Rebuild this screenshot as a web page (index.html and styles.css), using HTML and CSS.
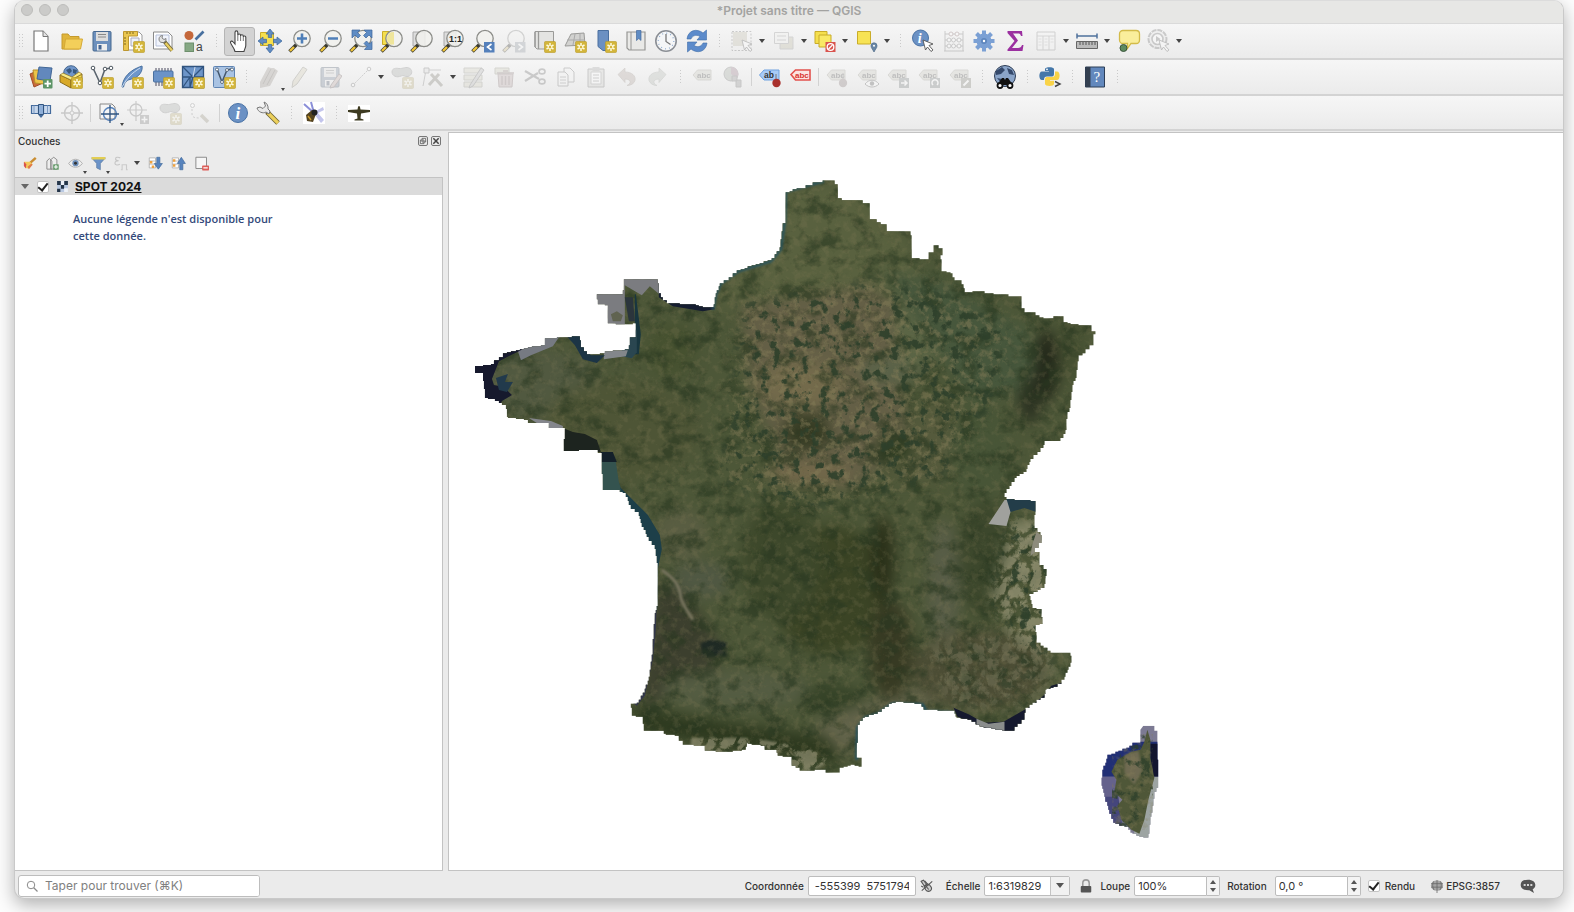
FILE: index.html
```html
<!DOCTYPE html>
<html lang="fr">
<head>
  <meta charset="utf-8">
  <title>*Projet sans titre — QGIS</title>
  <link rel="stylesheet" href="styles.css">
</head>
<body>
  <!-- icon set -->
  <svg class="sprite" aria-hidden="true">
    <symbol id="star" viewBox="0 0 24 24"><rect x="12.500" y="12.500" width="11" height="11" rx="1" fill="#d3b53a" stroke="#b99a25" stroke-width=".6"/><path d="M18 14v8M14.500 16l7 4M21.500 16l-7 4" stroke="#fffbe0" stroke-width="1.500"/><circle cx="18" cy="18" r="1.200" fill="#d3b53a"/></symbol>
    <symbol id="glass" viewBox="0 0 24 24"><path d="M1.500 22.500 8.500 15.500" stroke="#3a3a30" stroke-width="3.600"/><path d="M2 22 6 18" stroke="#f0c53a" stroke-width="2.400"/><circle cx="14" cy="9.500" r="8.200" fill="#f1f1ed" fill-opacity=".85" stroke="#8b8c88" stroke-width="1.300"/></symbol>
    <symbol id="tag" viewBox="0 0 24 24"><path d="M2 10 6.500 5H20v10H6.500z" fill="#cfcbb4" stroke="#a8a592"/><text x="6" y="12.500" font-size="8" font-weight="700" font-family="Liberation Sans, sans-serif" fill="#555">abc</text></symbol>
    <symbol id="cursor" viewBox="0 0 24 24"><path d="M12 11l10 4-4 1.500 4 4.500-2 1.500-3.500-4.500-2 3z" fill="#fff" stroke="#555" stroke-width=".9"/></symbol>

    <symbol id="new" viewBox="0 0 24 24"><path d="M5 2h9l5 5.500V22H5z" fill="#fff" stroke="#777" stroke-width="1.200"/><path d="M14 2v5.500h5" fill="#e4e4e4" stroke="#777"/></symbol>
    <symbol id="open" viewBox="0 0 24 24"><path d="M2 20V5h6l2 2.500h9V20z" fill="#e0b53c" stroke="#c59a2c"/><path d="M4 20l1.500-10H22.500L20.500 20z" fill="#f3cf5a" stroke="#d5a935"/></symbol>
    <symbol id="save" viewBox="0 0 24 24"><rect x="3" y="2.500" width="18" height="19.500" rx="1" fill="#6d90bd" stroke="#47688f"/><rect x="6" y="3" width="12" height="9" fill="#ddd"/><path d="M8 5.500h8M8 8h8" stroke="#888"/><rect x="7" y="15" width="10" height="6.500" fill="#eee"/><rect x="8.500" y="16" width="3" height="4.500" fill="#456592"/></symbol>
    <symbol id="layout" viewBox="0 0 24 24"><path d="M6 3h12l3 3v15H6z" fill="#fff" stroke="#999"/><path d="M2.500 2.500h14v4.500H7.500v14.500h-5z" fill="#eac64f" stroke="#bd9730"/><path d="M6 3v2M9 3v2M12 3v2M3 9h2M3 12h2M3 15h2" stroke="#7d661c"/><path d="M10 9h8v8h-8z" fill="#eef2fa" stroke="#aab"/><use href="#star"/></symbol>
    <symbol id="manager" viewBox="0 0 24 24"><path d="M2.500 3H17l4 4v13H2.500z" fill="#fff" stroke="#8a8a8a"/><path d="M5 6h13v11H5z" fill="#f1f4fc" stroke="#b7c1da"/><path d="M13 12l8 9.500" stroke="#6f6434" stroke-width="3.800"/><path d="M14.500 14l6.500 7.500" stroke="#e9cf62" stroke-width="2.400"/><path d="M8 10c0-2 1.500-3.500 3.500-3.500L11 9l2 1.500 2-1c.5 3-2 4.500-4 4C9 13.500 8 12 8 10z" fill="#e2e2e2" stroke="#777" stroke-width=".9"/></symbol>
    <symbol id="style" viewBox="0 0 24 24"><circle cx="7" cy="6.500" r="4.500" fill="#c4673a"/><path d="M13.500 10.500l8-8" stroke="#48709f" stroke-width="2.600"/><rect x="3" y="14" width="8.500" height="8.500" fill="#86a884" stroke="#6d8f6c"/><text x="14" y="22" font-size="12" font-family="Liberation Sans, sans-serif" fill="#444">a</text></symbol>
    <symbol id="hand" viewBox="0 0 24 24"><path d="M8 22.500c-1-4-4-6.500-4.500-9-.2-1.500 1.500-2 2.700-.5L8 15V3.500c0-2.200 2.800-2.200 2.800 0v3c0-2 2.800-2 2.800 0v.5c0-1.800 2.700-1.600 2.700.2v.8c0-1.500 2.500-1.400 2.500.3v8c0 2.500-1.500 4-1.800 6.200z" fill="#fff" stroke="#444" stroke-width="1.100"/><path d="M10.800 6.500V12M13.600 7V12M16.300 8V12" stroke="#666" stroke-width=".9"/></symbol>
    <symbol id="pansel" viewBox="0 0 24 24"><path d="M2.500 3.500h13v13h-13z" fill="#f5df4e" stroke="#c9ac29"/><path d="M12 0l4 5h-2.300v3.500h-3.400V5H8zM12 24l4-5h-2.300v-3.500h-3.400V19H8zM0 12l5-4v2.300h3.500v3.400H5V16zM24 12l-5-4v2.300h-3.500v3.400H19V16z" fill="#5f8cc4" stroke="#3c659b" stroke-width=".7"/></symbol>
    <symbol id="zin" viewBox="0 0 24 24"><use href="#glass"/><path d="M14 4.500v10M9 9.500h10" stroke="#4f7fb8" stroke-width="2.600"/></symbol>
    <symbol id="zout" viewBox="0 0 24 24"><use href="#glass"/><path d="M9 9.500h10" stroke="#4f7fb8" stroke-width="2.600"/></symbol>
    <symbol id="zfull" viewBox="0 0 24 24"><use href="#glass"/><path d="M3 1h8L8.500 3.500l3 3-2.500 2.500-3-3L3 9zM23 1h-8l2.500 2.500-3 3 2.500 2.500 3-3L23 9zM23 20.500v-8l-2.500 2.500-3-3-2.500 2.500 3 3-2.500 3z" fill="#5f8cc4" stroke="#3c659b" stroke-width=".7"/></symbol>
    <symbol id="zsel" viewBox="0 0 24 24"><path d="M2.500 2.500h9v13h-9z" fill="#f5df4e" stroke="#c9ac29"/><use href="#glass"/><path d="M14 3a6.500 6.500 0 0 0-3 12.500h3z" fill="#efe59b"/></symbol>
    <symbol id="zlayer" viewBox="0 0 24 24"><path d="M3 3h12v14H3z" fill="#ddd" stroke="#aaa"/><use href="#glass"/></symbol>
    <symbol id="znative" viewBox="0 0 24 24"><path d="M3 3h12v14H3z" fill="#ddd" stroke="#aaa"/><use href="#glass"/><text x="8" y="12.500" font-size="9" font-weight="700" font-family="Liberation Sans, sans-serif" fill="#222">1:1</text></symbol>
    <symbol id="zlast" viewBox="0 0 24 24"><use href="#glass"/><path d="M13 13h10.500v10.500H13z" fill="#5480bb"/><path d="M20.500 15l-4 3 4 3" fill="none" stroke="#fff" stroke-width="1.600"/></symbol>
    <symbol id="znext" viewBox="0 0 24 24"><use href="#glass"/><path d="M13 13h10.500v10.500H13z" fill="#8fa0b5"/><path d="M16.500 15l4 3-4 3" fill="none" stroke="#fff" stroke-width="1.600"/></symbol>
    <symbol id="mapview" viewBox="0 0 24 24"><path d="M3 2.500h18.500V20H5L3 18z" fill="#e4e4e2" stroke="#9a9a98"/><path d="M6.500 3v17M3 3v15" stroke="#9a9a98" stroke-width="1.300"/><use href="#star"/></symbol>
    <symbol id="view3d" viewBox="0 0 24 24"><path d="M8 5l13-1 1 12-20 1z" fill="#d2d2d0" stroke="#9a9a98"/><path d="M12 5l-2 11M17 5v11M4 11h18" stroke="#aaa"/><use href="#star"/></symbol>
    <symbol id="bookmark" viewBox="0 0 24 24"><path d="M5 1.500h10.500v20l-5.500 0-5-4z" fill="#6b90c2" stroke="#4a6f9f"/><use href="#star"/></symbol>
    <symbol id="bookmarks" viewBox="0 0 24 24"><path d="M3 3h18v18H5l-2-2z" fill="#e9e9e7" stroke="#969694" stroke-width="1.200"/><path d="M7 3v18" stroke="#969694"/><path d="M12.500 1.500h4.500v10l-2.200-2-2.300 2z" fill="#5f8cc4" stroke="#466b9d" stroke-width=".7"/></symbol>
    <symbol id="clock" viewBox="0 0 24 24"><circle cx="12" cy="12" r="10.200" fill="#f5f6f7" stroke="#8b8f95" stroke-width="1.600"/><circle cx="12" cy="12" r="7.800" fill="none" stroke="#8faccf" stroke-width="1.200" stroke-dasharray="1 3.080"/><path d="M12 5v7.500l4.500 3" fill="none" stroke="#777" stroke-width="1.300"/></symbol>
    <symbol id="refresh" viewBox="0 0 24 24"><path d="M2 10C3 1 12-1 18 4l3.500-3v10H12l3-3.500C11 5 7 7 6 10zM22 14c-1 9-10 11-16 6l-3.500 3V13H12l-3 3.500c4 2.500 8 .5 9-2.500z" fill="#5c8bcb" stroke="#416faa" stroke-width=".6"/></symbol>
    <symbol id="select" viewBox="0 0 24 24"><path d="M2 2.500h19v19H2z" fill="none" stroke="#777" stroke-dasharray="2 1.500"/><path d="M3 3h14v14H3z" fill="#c9bf98"/><use href="#cursor"/></symbol>
    <symbol id="selval" viewBox="0 0 24 24"><path d="M8 8h13v12H8z" fill="#c7bf8a" stroke="#999"/><path d="M2.500 3.500h14v11h-14z" fill="#f0f0ec" stroke="#999"/><path d="M5 7h9M5 11h9" stroke="#999"/></symbol>
    <symbol id="desel" viewBox="0 0 24 24"><path d="M2 2.500h12v12H2z" fill="#f5df4e" stroke="#c9ac29"/><path d="M6 6h12v12H6z" fill="#f9e965" stroke="#c9ac29"/><path d="M12.500 13h10v10h-10z" fill="#d9534d"/><circle cx="17.500" cy="18" r="3.300" fill="none" stroke="#fff" stroke-width="1.300"/><path d="M15.500 20l4-4" stroke="#fff" stroke-width="1.300"/></symbol>
    <symbol id="selloc" viewBox="0 0 24 24"><path d="M2.500 2.500h13v12.500h-13z" fill="#f7e354" stroke="#c9ac29"/><path d="M19 23c-1.500-3-3-4-3-6.200a3 3 0 0 1 6 0c0 2.200-1.500 3.200-3 6.200z" fill="#6886a5" stroke="#4f6b88" stroke-width=".7"/><circle cx="19" cy="16.800" r="1" fill="#fff"/></symbol>
    <symbol id="info" viewBox="0 0 24 24"><circle cx="12" cy="12" r="9.500" fill="#6b91c4" stroke="#4a73a6"/><text x="9.500" y="18" font-size="17" font-style="italic" font-weight="700" font-family="Liberation Serif, serif" fill="#fff">i</text></symbol>
    <symbol id="identify" viewBox="0 0 24 24"><circle cx="9.500" cy="9" r="8" fill="#6b91c4" stroke="#4a73a6"/><text x="6.800" y="14" font-size="14" font-style="italic" font-weight="700" font-family="Liberation Serif, serif" fill="#fff">i</text><use href="#cursor"/></symbol>
    <symbol id="abacus" viewBox="0 0 24 24"><path d="M3 2v20M21 2v20M2 22h20M3 5h18M3 11h18M3 17h18" stroke="#777" fill="none"/><g fill="#fff" stroke="#a66"><circle cx="9" cy="5" r="2"/><circle cx="15" cy="5" r="2"/></g><g fill="#fff" stroke="#777"><circle cx="7" cy="11" r="2"/><circle cx="11.500" cy="11" r="2"/><circle cx="17" cy="11" r="2"/><circle cx="7" cy="17" r="2"/><circle cx="11.500" cy="17" r="2"/><circle cx="17" cy="17" r="2"/></g></symbol>
    <symbol id="gear" viewBox="0 0 24 24"><g stroke="#7ba0d4" stroke-width="4"><path d="M12 1.500v21M1.500 12h21M4.500 4.500l15 15M19.500 4.500l-15 15"/></g><circle cx="12" cy="12" r="7.500" fill="#7ba0d4"/><circle cx="12" cy="12" r="3" fill="#5e86be"/><circle cx="12" cy="12" r="1.200" fill="#fff"/></symbol>
    <symbol id="sigma" viewBox="0 0 24 24"><path d="M4.500 2h14.500l.5 5h-1.500c-.5-2-1.500-2.500-3-2.500H10l5 7-6 7.500h6c2 0 3.500-1 4-3h1.500l-1 6H4.500v-1.500l7-8.500-7-8z" fill="#9b30a0"/></symbol>
    <symbol id="table" viewBox="0 0 24 24"><path d="M3 3h18v18H3z" fill="#f5f5f5" stroke="#888"/><path d="M3 7h18M9 7v14M15 7v14" stroke="#999"/><path d="M4.500 10h3M4.500 13h3M4.500 16h3M10.500 10h3M10.500 13h3M10.500 16h3M16.500 10h3M16.500 13h3" stroke="#bbb"/></symbol>
    <symbol id="ruler" viewBox="0 0 24 24"><path d="M2 7h20M2 4.500v5M22 4.500v5" stroke="#4f719c" stroke-width="1.500"/><path d="M1.500 12.500h21V19.500h-21z" fill="#bbb" stroke="#666"/><path d="M5 13v3M8 13v3M11 13v3M14 13v3M17 13v3M20 13v3" stroke="#555"/></symbol>
    <symbol id="tip" viewBox="0 0 24 24"><path d="M6 1.500h13c2 0 3.500 1.500 3.500 3.500v6c0 2-1.500 3.500-3.500 3.500h-5l-3.500 5v-5H6c-2 0-3.500-1.500-3.500-3.500V5c0-2 1.500-3.500 3.500-3.500z" fill="#faee9b" stroke="#d3bb49" stroke-width="1.300"/><circle cx="6.500" cy="19" r="3.500" fill="#5d8a5f" stroke="#39543b"/></symbol>
    <symbol id="action" viewBox="0 0 24 24"><circle cx="10.500" cy="10" r="9" fill="#e8e8e8" stroke="#777" stroke-width="2" stroke-dasharray="5 1"/><circle cx="10.500" cy="10" r="5.500" fill="#fff" stroke="#777" stroke-width="1.600"/><path d="M9 7l4.500 3L9 13z" fill="#777"/><use href="#cursor"/></symbol>

    <symbol id="datasource" viewBox="0 0 24 24"><path d="M1 9l9-4 4 13-9 4z" fill="#c96a3a" stroke="#9f4c25"/><path d="M4 5h12l-1 14-9-1z" fill="#edc449" stroke="#b6902d"/><path d="M10 2l13 1-2 13-13-2z" fill="#6288bd" stroke="#426796"/><rect x="14" y="14" width="9.500" height="9.500" rx="1" fill="#5d9467"/><path d="M18.700 15.500v6.500M15.500 18.700h6.500" stroke="#fff" stroke-width="1.800"/></symbol>
    <symbol id="geopkg" viewBox="0 0 24 24"><circle cx="12" cy="8" r="7.300" fill="#6f95c9" stroke="#46678f"/><path d="M7 5l4-2 2 3-3 3zM14 4l4 1-1 4-3-1z" fill="#37587f"/><path d="M1 10l11 5v8L1 17z" fill="#d8a928" stroke="#8a6d1b"/><path d="M12 15l11-6v8l-11 6z" fill="#f5d94b" stroke="#8a6d1b"/><path d="M1 10l3-2 9 4 7-5 3 2-11 6z" fill="#f9ea85" stroke="#8a6d1b" stroke-width=".7"/><use href="#star"/></symbol>
    <symbol id="vector" viewBox="0 0 24 24"><path d="M3 3l7 15L15 4l7-1" fill="none" stroke="#5a646e" stroke-width="1.600"/><g fill="#fff" stroke="#4c565f"><circle cx="3" cy="3" r="1.800"/><circle cx="10" cy="18" r="1.800"/><circle cx="15" cy="4" r="1.800"/><circle cx="21" cy="3" r="1.800"/></g><use href="#star"/></symbol>
    <symbol id="feather" viewBox="0 0 24 24"><path d="M2 22C3 12 10 5 22 1c1 5-3 11-9 12.500-4 1.500-8 1-9.500 8.500z" fill="#6e96cb" stroke="#48709f"/><path d="M2 22C7 13 12 8 20 3" fill="none" stroke="#d6e2f2" stroke-width=".9"/><use href="#star"/></symbol>
    <symbol id="memory" viewBox="0 0 24 24"><path d="M5 3v18M8 3v18M11 3v18M14 3v18M17 3v18M20 3v18" stroke="#667" stroke-width="1.200"/><rect x="2.500" y="6" width="19.500" height="11" rx="1" fill="#6b93c8" stroke="#4a709f"/><use href="#star"/></symbol>
    <symbol id="mesh" viewBox="0 0 24 24"><path d="M1.500 1.500h21v21h-21z" fill="#6d95c8" stroke="#31547f" stroke-width="1.300"/><path d="M2 12h20M9 12v10M2 2l10 10 10-10M12 12L9 22M2 22l7-10" fill="none" stroke="#31547f" stroke-width="1.300"/><path d="M14 2l-2 10" stroke="#cfdcee"/><use href="#star"/></symbol>
    <symbol id="virtual" viewBox="0 0 24 24"><rect x="1.500" y="1.500" width="21" height="21" rx="1" fill="#a9c3e3" stroke="#5f84b3"/><path d="M5 4l5 13 5-12 5-1" fill="none" stroke="#45586d" stroke-width="1.500"/><g fill="#fff" stroke="#45586d" stroke-width=".8"><circle cx="5" cy="4.500" r="1.500"/><circle cx="10" cy="17" r="1.500"/><circle cx="15" cy="5" r="1.500"/><circle cx="20" cy="4.500" r="1.500"/></g><use href="#star"/></symbol>
    <symbol id="edits" viewBox="0 0 24 24"><path d="M3 17L11 2l3 1 3 0 4 3-8 15-5 1-5 1z" fill="#a99a8a"/><path d="M6 19l8-15M10 20l8-15" stroke="#7a6b5a"/></symbol>
    <symbol id="pencil" viewBox="0 0 24 24"><path d="M5 16L15 2l4 2.500L9 19l-5 3.500z" fill="#ded19a" stroke="#8f8a70"/></symbol>
    <symbol id="saveedit" viewBox="0 0 24 24"><use href="#save"/><path d="M13 20l8-11 3 2-8 11-4 1z" fill="#d9aaa0" stroke="#866"/></symbol>
    <symbol id="line" viewBox="0 0 24 24"><path d="M4 20L20 4" stroke="#888" stroke-dasharray="2 1"/><g fill="#fff" stroke="#777"><circle cx="4" cy="20" r="1.800"/><circle cx="20" cy="4" r="1.800"/></g></symbol>
    <symbol id="blob" viewBox="0 0 24 24"><path d="M2 7c0-4 4-4 7-3.500C13 4 16 1 20 3.500c3 2 2 7-2 8-4 .5-4-2-7-.5-4 2-9 0-9-4z" fill="#aab0a8" stroke="#888"/><use href="#star"/></symbol>
    <symbol id="vertex" viewBox="0 0 24 24"><path d="M2 21L5 5h15" fill="none" stroke="#888"/><path d="M3 3h5v5H3z" fill="#ddd" stroke="#777"/><path d="M8 20l10-11M10 9l11 12" stroke="#8a856a" stroke-width="3"/></symbol>
    <symbol id="multi" viewBox="0 0 24 24"><path d="M2 3h18v5H2zM2 10h18v5H2zM2 17h18v5H2z" fill="#d9d3ac" stroke="#999a80"/><path d="M8 20L19 3l3 2-11 16-4 2z" fill="#bbb" stroke="#777"/></symbol>
    <symbol id="trash" viewBox="0 0 24 24"><path d="M2 3h14v6H2z" fill="#d5cfa6" stroke="#997"/><path d="M5 9h15l-1 13H6z" fill="#d3a9a9" stroke="#a07777"/><path d="M4 8h17M9 11v9M12.500 11v9M16 11v9M10 6h5" stroke="#a07777" stroke-width="1.400"/></symbol>
    <symbol id="cut" viewBox="0 0 24 24"><path d="M2 6l14 8M2 16L15 8" stroke="#777" stroke-width="2.200"/><g fill="none" stroke="#777" stroke-width="1.600"><ellipse cx="19" cy="6.500" rx="3" ry="2.400"/><ellipse cx="19" cy="16.500" rx="3" ry="2.400"/></g></symbol>
    <symbol id="copy" viewBox="0 0 24 24"><path d="M10 3h6l4 4v10H10z" fill="#f5f5f5" stroke="#777"/><path d="M4 7h7l3 3v11H4z" fill="#f5f5f5" stroke="#777"/><path d="M6 12h6M6 15h6M6 18h6" stroke="#888"/></symbol>
    <symbol id="paste" viewBox="0 0 24 24"><path d="M4 4h16v18H4z" fill="#d2d2c8" stroke="#777"/><path d="M7 7h10v12H7z" fill="#fff" stroke="#999"/><path d="M8.500 2h7v4h-7z" fill="#aaa"/><path d="M9 10h6M9 13h6M9 16h6" stroke="#888"/></symbol>
    <symbol id="undo" viewBox="0 0 24 24"><path d="M3 9.500l7-6.500v4c7 0 11 4 10 8.500-1 3-4 5-8 5 4-2 5-6-2-6.500v3.500z" fill="#c4a795" stroke="#a08a7a" stroke-width=".7"/></symbol>
    <symbol id="redo" viewBox="0 0 24 24"><path d="M21 9.500l-7-6.500v4c-7 0-11 4-10 8.500 1 3 4 5 8 5-4-2-5-6 2-6.500v3.500z" fill="#b5bfb0" stroke="#929c8d" stroke-width=".7"/></symbol>
    <symbol id="diagram" viewBox="0 0 24 24"><circle cx="9" cy="9" r="7" fill="#9fb09a" stroke="#777"/><path d="M9 9V2a7 7 0 0 1 6 11z" fill="#b79"/><path d="M10 11h5v5h-5zM14 15h5v7h-5z" fill="#999" stroke="#777"/></symbol>
    <symbol id="pin" viewBox="0 0 24 24"><path d="M1.500 10L6 5h15v10H6z" fill="#a8cbf7" stroke="#6ea1df"/><text x="6" y="12.800" font-size="8.500" font-weight="700" font-family="Liberation Sans, sans-serif" fill="#333">ab</text><path d="M18 9v6" stroke="#777"/><circle cx="18.500" cy="18" r="4.200" fill="#a8302c"/></symbol>
    <symbol id="redabc" viewBox="0 0 24 24"><path d="M2 9.500L6.500 5H21v10H6.500z" fill="#fce3e1" stroke="#e2514d" stroke-width="1.600"/><text x="6" y="12.500" font-size="8" font-weight="700" font-family="Liberation Sans, sans-serif" fill="#d8332f">abc</text></symbol>
    <symbol id="tagpin" viewBox="0 0 24 24"><use href="#tag"/><circle cx="18" cy="18" r="4.200" fill="#a08080"/><path d="M18 8v6" stroke="#777"/></symbol>
    <symbol id="tageye" viewBox="0 0 24 24"><use href="#tag"/><path d="M9 19c4-5 10-5 14 0-4 4-10 4-14 0z" fill="#fff" stroke="#666"/><circle cx="16" cy="18.500" r="2.200" fill="#666"/></symbol>
    <symbol id="tagmove" viewBox="0 0 24 24"><use href="#tag"/><path d="M13 13h10v10H13z" fill="#7a8a8a"/><path d="M15 18h6M18.500 15.500l2.500 2.500-2.500 2.500" fill="none" stroke="#fff" stroke-width="1.500"/></symbol>
    <symbol id="tagrot" viewBox="0 0 24 24"><use href="#tag"/><path d="M13 13h10v10H13z" fill="#7a8a8a"/><path d="M16 20a3 3 0 1 1 4 0" fill="none" stroke="#fff" stroke-width="1.500"/></symbol>
    <symbol id="tagedit" viewBox="0 0 24 24"><use href="#tag"/><path d="M13 13h10v10H13z" fill="#8a8a70"/><path d="M15.500 20.500l5-5" stroke="#fff" stroke-width="2"/></symbol>
    <symbol id="globe" viewBox="0 0 24 24"><circle cx="12" cy="11" r="10.500" fill="#8ba5c9" stroke="#2d3c54"/><path d="M3 6l6-4 3 3-4 4-5 1zM14 3l5 2 2 5-5-1zM4 13l5 1v5z" fill="#35496b"/><path d="M4 20l5-7h2l1 2 1-2h2l5 7z" fill="#111"/><circle cx="7" cy="20.500" r="2.500" fill="#fff" stroke="#111" stroke-width="1.800"/><circle cx="17" cy="20.500" r="2.500" fill="#fff" stroke="#111" stroke-width="1.800"/></symbol>
    <symbol id="python" viewBox="0 0 24 24"><path d="M7 4c0-2.500 9-2.500 9 0v5c0 2-1 2.500-3 2.500H9c-2 0-3 1-3 3.500H4c-3.500 0-3.500-8.500 0-8.500h7V6H7z" fill="#4577a9"/><path d="M17 6.500h2c3.500 0 3.500 8.500 0 8.500h-7v.8h4v3.200c0 2.500-9 2.500-9 0v-4.500c0-2 1-2.500 3-2.500h4c2 0 3-1 3-3z" fill="#f9d348"/><circle cx="9" cy="4.300" r=".9" fill="#fff"/><path d="M17 16.500l5 2.500-5 2.500" fill="none" stroke="#444" stroke-width="1.400"/></symbol>
    <symbol id="help" viewBox="0 0 24 24"><path d="M2.500 2h19v20h-19z" fill="#6288bd" stroke="#2c3e57"/><path d="M2.500 2h5v20h-5z" fill="#333f50"/><text x="10.500" y="17" font-size="15" font-family="Liberation Serif, serif" fill="#fff">?</text></symbol>

    <symbol id="gps" viewBox="0 0 24 24"><path d="M2.500 4.500h7v8h-7zM14.500 4.500h7v8h-7z" fill="#c7d7ec" stroke="#436a9c" stroke-width="1.200"/><path d="M5 4.500v8M18.500 4.500v8" stroke="#7d9cc4"/><path d="M9.500 3.500h5v10h-5z" fill="#8fafd8" stroke="#31547f"/><path d="M9.500 14h5L12 17z" fill="#436a9c"/></symbol>
    <symbol id="target" viewBox="0 0 24 24"><circle cx="12" cy="12" r="7.500" fill="none" stroke="#777" stroke-width="1.500"/><path d="M12 1v22M1 12h22" stroke="#777" stroke-width="1.400"/><circle cx="12" cy="12" r="2" fill="#eee" stroke="#777"/></symbol>
    <symbol id="recenter" viewBox="0 0 24 24"><path d="M3 3h12l3 3v12H3z" fill="#f5f5f5" stroke="#888"/><circle cx="13" cy="13" r="6.500" fill="none" stroke="#5a85bd" stroke-width="1.400"/><path d="M13 4v18M4 13h18" stroke="#31547f" stroke-width="1.300"/></symbol>
    <symbol id="gpsadd" viewBox="0 0 24 24"><circle cx="9" cy="9" r="6" fill="none" stroke="#777" stroke-width="1.300"/><path d="M9 0v20M0 9h20" stroke="#777" stroke-width="1.200"/><rect x="13" y="14" width="9" height="9" fill="#888"/><path d="M17.500 15.500v6M14.500 18.500h6" stroke="#fff" stroke-width="1.500"/></symbol>
    <symbol id="track" viewBox="0 0 24 24"><path d="M3 4v9c0 4 4 4 9 4" fill="none" stroke="#888" stroke-dasharray="2 2"/><circle cx="3.500" cy="4.500" r="2" fill="#fff" stroke="#888"/><path d="M12 14l7 7" stroke="#a79a70" stroke-width="3.600"/></symbol>
    <symbol id="wrench" viewBox="0 0 24 24"><path d="M11 11l11 11" stroke="#6f6434" stroke-width="5"/><path d="M12 12l10 10" stroke="#ecd05c" stroke-width="3.200"/><path d="M1 7c1 4 6 6 9 4l3 2 1-3-2-2c.5-3-1-6-4-7l1.500 4L7 7.500 4 6z" fill="#e9e9e9" stroke="#777"/></symbol>
    <symbol id="bug" viewBox="0 0 24 24"><path d="M1 1h22v22H1z" fill="#fff"/><path d="M2 3l10 9M12 12L9 1" stroke="#8b8fd8" stroke-width="2"/><path d="M12 11l9-5 1 3-6 3 6 7-3 3-7-9z" fill="#c3c5ec"/><path d="M4 14l6-5 4 4-3 8-6-1z" fill="#54431f"/><circle cx="12.500" cy="11.500" r="3" fill="#222"/><path d="M6 15l3 4" stroke="#c79a2f" stroke-width="1.500"/></symbol>
    <symbol id="plane" viewBox="0 0 24 24"><path d="M1 4h22v17H1z" fill="#fff"/><path d="M11 6c.5-1.500 1.500-1.500 2 0l.5 2.500 9.500.5v2l-9 1.500-.5 5 3 1v1H7.500v-1l3-1-.5-5-9-1.500V9l9.500-.5z" fill="#3d3a20"/></symbol>

    <symbol id="brush" viewBox="0 0 24 24"><path d="M13 11l9-8" stroke="#c98d32" stroke-width="4"/><path d="M3 9l10 0 4 4-6 7-6-1z" fill="#f3c95a"/><path d="M3 9l4 4-1 7-3-4z" fill="#d9534d"/><path d="M9 17l6-5 2 2-6 7z" fill="#e07a4a"/></symbol>
    <symbol id="group" viewBox="0 0 24 24"><path d="M3 8l4-4 4 4v13H3zM9 6l5-4 5 4v15H9z" fill="#eee" stroke="#8a8a8a" stroke-width="1.500"/><rect x="13" y="13" width="9" height="9" rx="1" fill="#6a9d6f"/><path d="M17.500 14.500v6M14.500 17.500h6" stroke="#fff" stroke-width="1.800"/></symbol>
    <symbol id="eye" viewBox="0 0 24 24"><path d="M1 12c6-9 16-9 22 0-6 8-16 8-22 0z" fill="#eee" stroke="#aaa" stroke-width="1.400"/><circle cx="12" cy="11.500" r="5" fill="#6d8fba"/><circle cx="12" cy="11.500" r="2.300" fill="#333"/></symbol>
    <symbol id="funnel" viewBox="0 0 24 24"><path d="M1 3h22l-8 9v10l-6-3v-7z" fill="#6b93c8" stroke="#58799f"/><path d="M1 1.500h22v4H1z" fill="#e3ce53"/></symbol>
    <symbol id="epsilon" viewBox="0 0 24 24"><path d="M10 3c-4-2-8-1-7.500 2 .3 2 3 2.500 5 2.500-3 0-6 1-6 4 0 3.500 5 3.500 8 1.500" fill="none" stroke="#777" stroke-width="1.800"/><path d="M11 22h2v-8h7v8h2" fill="none" stroke="#888" stroke-width="1.800"/></symbol>
    <symbol id="expand" viewBox="0 0 24 24"><path d="M2 3h10v16H2z" fill="#fff" stroke="#999"/><path d="M2 8h9M2 13h9" stroke="#999"/><path d="M3 8h4v4H3zM6 15h4v4H6z" fill="#f0a13c"/><path d="M14 2h5v10h4l-6.500 9L10 12h4z" fill="#5783bd" stroke="#3f6698"/></symbol>
    <symbol id="collapse" viewBox="0 0 24 24"><path d="M2 3h10v16H2z" fill="#fff" stroke="#999"/><path d="M2 8h9M2 13h9" stroke="#999"/><path d="M3 5h4v4H3zM3 13h4v4H3z" fill="#f0a13c"/><path d="M14 22h5V12h4l-6.500-10L10 12h4z" fill="#5783bd" stroke="#3f6698"/></symbol>
    <symbol id="remove" viewBox="0 0 24 24"><path d="M3 2h17v18H3z" fill="#f6f6f6" stroke="#888" stroke-width="1.500"/><rect x="13" y="15" width="11" height="8" rx="1" fill="#dd5f5a"/><path d="M15 19h7" stroke="#fff" stroke-width="2"/></symbol>
    <symbol id="raster" viewBox="0 0 24 24"><path d="M2 2h20v20H2z" fill="#b9c9e2"/><path d="M2 2h7v7H2zM15 2h7v7h-7zM9 9h6v7H9zM2 16h6v6H2z" fill="#243549"/><path d="M9 2h6v7H9zM15 15h7v7h-7z" fill="#eef2f8"/></symbol>
    <symbol id="mouse" viewBox="0 0 24 24"><path d="M2 4l4-2 6 8-4 3zM8 15a5 5 0 0 1 9-4c3 3 4 5 2 8s-7 3-9 0z" fill="#ccc" stroke="#555" stroke-width="1.800"/><path d="M3 20L21 4M10 12l5 6M2 12l4 2M8 3l7 8" stroke="#555" stroke-width="1.800"/></symbol>
    <symbol id="lock" viewBox="0 0 24 24"><path d="M6.500 12V7a5.500 5.500 0 0 1 11 0v5" fill="none" stroke="#999" stroke-width="2.600"/><rect x="3" y="12" width="18" height="11" rx="1.500" fill="#555"/></symbol>
    <symbol id="crs" viewBox="0 0 24 24"><ellipse cx="12" cy="11" rx="10.500" ry="9" fill="#a5a5a5"/><path d="M2 8h20M2 14h20M12 2v22M6 4c-2 5-2 10 1 15M18 4c2 5 2 10-1 15" fill="none" stroke="#666" stroke-width="1.300"/></symbol>
    <symbol id="chat" viewBox="0 0 24 24"><path d="M12 2.500c7 0 11 3.500 11 8 0 3-1.500 5-4 6.500l2 5.500-7-4c-7 .5-13-2.500-13-8s4-8 11-8z" fill="#555"/><path d="M5.500 10.500h3M10.500 10.500h3M15.500 10.500h3" stroke="#fff" stroke-width="2"/></symbol>
    <symbol id="search" viewBox="0 0 24 24"><circle cx="10" cy="10" r="7.500" fill="none" stroke="#8a8a8a" stroke-width="2"/><path d="M15.500 15.500L23 23" stroke="#8a8a8a" stroke-width="2.400"/></symbol>
    <symbol id="float" viewBox="0 0 24 24"><path d="M9 4h11v11H9zM4 9h11v11H4z" fill="#eee" stroke="#555" stroke-width="2.400"/></symbol>
    <symbol id="close" viewBox="0 0 24 24"><path d="M4 4l16 16M20 4L4 20" stroke="#444" stroke-width="4.500"/></symbol>
  </svg>

  <div class="window">
    <header class="titlebar">
      <div class="lights"><i></i><i></i><i></i></div>
      <h1>*Projet sans titre — QGIS</h1>
    </header>

    <div class="toolbar">
      <span class="grip"></span>
      <div class="group file">
        <button title="Nouveau projet"><svg><use href="#new"/></svg></button>
        <button title="Ouvrir"><svg><use href="#open"/></svg></button>
        <button title="Enregistrer"><svg><use href="#save"/></svg></button>
        <button title="Nouvelle mise en page"><svg><use href="#layout"/></svg></button>
        <button title="Gestionnaire de mises en page"><svg><use href="#manager"/></svg></button>
        <button title="Gestionnaire de symboles"><svg><use href="#style"/></svg></button>
      </div>
      <span class="grip"></span>
      <div class="group nav">
        <button class="active" title="Se déplacer"><svg><use href="#hand"/></svg></button>
        <button title="Déplacer vers la sélection"><svg><use href="#pansel"/></svg></button>
        <button title="Zoom +"><svg><use href="#zin"/></svg></button>
        <button title="Zoom -"><svg><use href="#zout"/></svg></button>
        <button title="Zoom sur l'étendue"><svg><use href="#zfull"/></svg></button>
        <button title="Zoom sur la sélection"><svg><use href="#zsel"/></svg></button>
        <button title="Zoom sur la couche"><svg><use href="#zlayer"/></svg></button>
        <button title="Résolution native"><svg><use href="#znative"/></svg></button>
        <button title="Zoom précédent"><svg><use href="#zlast"/></svg></button>
        <button title="Zoom suivant" disabled><svg><use href="#znext"/></svg></button>
        <button title="Nouvelle vue"><svg><use href="#mapview"/></svg></button>
        <button title="Nouvelle vue 3D"><svg><use href="#view3d"/></svg></button>
        <button title="Nouveau signet"><svg><use href="#bookmark"/></svg></button>
        <button title="Signets"><svg><use href="#bookmarks"/></svg></button>
        <button title="Contrôleur temporel"><svg><use href="#clock"/></svg></button>
        <button title="Actualiser"><svg><use href="#refresh"/></svg></button>
      </div>
      <span class="grip"></span>
      <div class="group selection">
        <button class="menu dim" title="Sélectionner"><svg><use href="#select"/></svg></button>
        <button class="menu dim" title="Sélection par valeur"><svg><use href="#selval"/></svg></button>
        <button class="menu" title="Désélectionner"><svg><use href="#desel"/></svg></button>
        <button class="menu" title="Sélection par localisation"><svg><use href="#selloc"/></svg></button>
      </div>
      <span class="grip"></span>
      <div class="group attributes">
        <button title="Identifier"><svg><use href="#identify"/></svg></button>
        <button title="Calculatrice" disabled><svg><use href="#abacus"/></svg></button>
        <button title="Traitements"><svg><use href="#gear"/></svg></button>
        <button title="Statistiques"><svg><use href="#sigma"/></svg></button>
        <button class="menu dim" title="Table d'attributs"><svg><use href="#table"/></svg></button>
        <button class="menu" title="Mesurer"><svg><use href="#ruler"/></svg></button>
        <button title="Infobulles"><svg><use href="#tip"/></svg></button>
        <button class="menu dim" title="Actions"><svg><use href="#action"/></svg></button>
      </div>
    </div>

    <div class="toolbar">
      <span class="grip"></span>
      <div class="group sources">
        <button title="Sources de données"><svg><use href="#datasource"/></svg></button>
        <button title="Nouveau GeoPackage"><svg><use href="#geopkg"/></svg></button>
        <button title="Nouveau Shapefile"><svg><use href="#vector"/></svg></button>
        <button title="Nouvelle couche SpatiaLite"><svg><use href="#feather"/></svg></button>
        <button title="Couche temporaire"><svg><use href="#memory"/></svg></button>
        <button title="Nouveau maillage"><svg><use href="#mesh"/></svg></button>
        <button title="Couche virtuelle"><svg><use href="#virtual"/></svg></button>
      </div>
      <span class="grip"></span>
      <div class="group editing">
        <button class="corner dim" title="Modifications en cours"><svg><use href="#edits"/></svg></button>
        <button title="Basculer en édition" disabled><svg><use href="#pencil"/></svg></button>
        <button title="Enregistrer les modifications" disabled><svg><use href="#saveedit"/></svg></button>
        <button class="menu dim" title="Numériser"><svg><use href="#line"/></svg></button>
        <button title="Ajouter un polygone" disabled><svg><use href="#blob"/></svg></button>
        <button class="menu dim" title="Outil de nœud"><svg><use href="#vertex"/></svg></button>
        <button title="Modifier les attributs" disabled><svg><use href="#multi"/></svg></button>
        <button title="Supprimer" disabled><svg><use href="#trash"/></svg></button>
        <button title="Couper" disabled><svg><use href="#cut"/></svg></button>
        <button title="Copier" disabled><svg><use href="#copy"/></svg></button>
        <button title="Coller" disabled><svg><use href="#paste"/></svg></button>
        <button title="Annuler" disabled><svg><use href="#undo"/></svg></button>
        <button title="Rétablir" disabled><svg><use href="#redo"/></svg></button>
      </div>
      <span class="grip"></span>
      <div class="group labels">
        <button title="Étiquetage" disabled><svg><use href="#tag"/></svg></button>
        <button title="Diagrammes" disabled><svg><use href="#diagram"/></svg></button>
        <span class="sep"></span>
        <button title="Étiquettes épinglées"><svg><use href="#pin"/></svg></button>
        <button title="Étiquettes non placées"><svg><use href="#redabc"/></svg></button>
        <span class="sep"></span>
        <button title="Épingler" disabled><svg><use href="#tagpin"/></svg></button>
        <button title="Afficher ou cacher" disabled><svg><use href="#tageye"/></svg></button>
        <button title="Déplacer l'étiquette" disabled><svg><use href="#tagmove"/></svg></button>
        <button title="Pivoter l'étiquette" disabled><svg><use href="#tagrot"/></svg></button>
        <button title="Modifier l'étiquette" disabled><svg><use href="#tagedit"/></svg></button>
      </div>
      <span class="grip"></span>
      <button title="MetaSearch"><svg><use href="#globe"/></svg></button>
      <span class="grip"></span>
      <button title="Console Python"><svg><use href="#python"/></svg></button>
      <span class="grip"></span>
      <button title="Aide"><svg><use href="#help"/></svg></button>
      <span class="grip"></span>
    </div>

    <div class="toolbar last">
      <span class="grip"></span>
      <div class="group gps">
        <button title="Connecter le GPS"><svg><use href="#gps"/></svg></button>
        <button title="Recentrer" disabled><svg><use href="#target"/></svg></button>
        <span class="sep"></span>
        <button class="corner" title="Options de centrage"><svg><use href="#recenter"/></svg></button>
        <button title="Ajouter un sommet" disabled><svg><use href="#gpsadd"/></svg></button>
        <button title="Créer une entité" disabled><svg><use href="#blob"/></svg></button>
        <button title="Réinitialiser la trace" disabled><svg><use href="#track"/></svg></button>
        <span class="sep"></span>
        <button title="Informations GPS"><svg><use href="#info"/></svg></button>
        <button title="Paramètres GPS"><svg><use href="#wrench"/></svg></button>
      </div>
      <span class="grip"></span>
      <button title="Extension satellite"><svg><use href="#bug"/></svg></button>
      <span class="grip"></span>
      <button title="Extension avion"><svg><use href="#plane"/></svg></button>
    </div>

    <main>
      <aside>
        <div class="panel-title">
          <h2>Couches</h2>
          <button title="Détacher"><svg><use href="#float"/></svg></button>
          <button title="Fermer"><svg><use href="#close"/></svg></button>
        </div>
        <div class="panel-tools">
          <button title="Style"><svg><use href="#brush"/></svg></button>
          <button title="Ajouter un groupe"><svg><use href="#group"/></svg></button>
          <button class="corner" title="Thèmes"><svg><use href="#eye"/></svg></button>
          <button class="corner" title="Filtrer la légende"><svg><use href="#funnel"/></svg></button>
          <button class="menu dim" title="Filtrer par expression"><svg><use href="#epsilon"/></svg></button>
          <button title="Tout étendre"><svg><use href="#expand"/></svg></button>
          <button title="Tout réduire"><svg><use href="#collapse"/></svg></button>
          <button title="Supprimer la couche"><svg><use href="#remove"/></svg></button>
        </div>
        <div class="tree">
          <div class="layer">
            <span class="arrow"></span>
            <input type="checkbox" id="spot" checked>
            <svg><use href="#raster"/></svg>
            <label for="spot">SPOT 2024</label>
          </div>
          <p>Aucune légende n'est disponible pour cette donnée.</p>
        </div>
      </aside>

      <section class="canvas">
        <svg viewBox="448 133 1115 737" role="img" aria-label="Carte de France">
          <defs>
            <clipPath id="clipFrance"><path class="outline" data-step="4" data-points="785,192 796,188 805,188 805,185 812,185 812,182 822,182 822,180 834,180 834,184 837,184 837,198 841,198 841,200 862,200 862,203 869,203 869,219 876,219 876,222 880,222 880,224 886,224 886,231 909,231 911,239 911,258 927,259 928,252 933,248 933,245 938,245 938,248 942,248 942,255 940,255 941,271 950,273 954,280 960,280 964,292 972,291 984,291 984,293 997,294 1008,294 1008,296 1016,296 1021,300 1021,308 1024,312 1035,312 1035,315 1043,318 1053,318 1053,316 1063,316 1063,322 1070,324 1086,325 1091,327 1091,331 1096,331 1093,337 1093,345 1085,353 1078,357 1076,378 1072,388 1069,412 1067,412 1066,430 1063,438 1060,441 1044,441 1043,448 1030,462 1026,472 1016,478 1004,497 1006,499 1034,501 1035,507 1034,528 1040,535 1041,543 1034,552 1039,557 1039,565 1046,572 1044,588 1029,596 1032,608 1040,609 1042,624 1035,625 1036,643 1050,653 1070,653 1071,663 1068,670 1064,680 1057,687 1046,690 1044,698 1032,705 1025,710 1024,720 1014,731 1006,731 983,727 971,720 956,717 954,711 925,710 921,704 899,702 891,704 877,714 864,718 857,728 856,758 861,762 861,767 854,765 839,769 839,773 826,773 825,770 803,771 791,763 791,757 778,756 776,750 765,750 764,746 747,743 745,750 728,752 707,751 704,746 686,745 678,736 665,734 663,731 643,731 642,717 632,716 630,704 636,703 642,693 648,677 652,647 654,613 657,603 657,567 654,545 648,537 641,523 638,512 630,505 625,493 619,490 602,490 601,453 597,450 563,451 563,442 564,428 549,428 548,423 532,423 527,420 507,417 505,405 494,399 484,398 484,393 482,373 474,372 474,366 490,364 493,360 502,353 527,347 544,344 544,338 579,336 580,347 586,354 603,353 604,351 628,349 629,337 635,336 635,323 628,324 607,323 607,305 597,303 596,294 622,294 623,279 657,279 658,293 662,300 666,303 691,304 702,307 712,307 715,293 719,283 736,270 755,264 771,258 779,247 782,223 785,222"/></clipPath>
            <clipPath id="clipCorse"><path class="outline" data-step="4" data-points="1143,726 1153,726 1154,731 1157,736 1158,788 1154,795 1151,817 1148,838 1143,837 1132,833 1128,827 1115,823 1109,810 1104,793 1101,782 1102,770 1107,755 1126,748 1132,743 1140,742 1140,730"/></clipPath>
            <filter id="soft" x="-30%" y="-30%" width="160%" height="160%" color-interpolation-filters="sRGB"><feGaussianBlur stdDeviation="7"/></filter>
            <filter id="edge" color-interpolation-filters="sRGB"><feGaussianBlur stdDeviation="1"/></filter>
            <!-- dark woodland speckle -->
            <filter id="woods" x="0" y="0" width="100%" height="100%" color-interpolation-filters="sRGB">
              <feTurbulence type="fractalNoise" baseFrequency=".05 .06" numOctaves="6" seed="8"/>
              <feColorMatrix values="0 0 0 0 .16  0 0 0 0 .22  0 0 0 0 .13  4 0 0 0 -1.9"/>
            </filter>
            <!-- light field speckle -->
            <filter id="fields" x="0" y="0" width="100%" height="100%" color-interpolation-filters="sRGB">
              <feTurbulence type="fractalNoise" baseFrequency=".14" numOctaves="4" seed="21"/>
              <feColorMatrix values="0 0 0 0 .52  0 0 0 0 .49  0 0 0 0 .35  4 0 0 0 -1.9"/>
            </filter>
            <filter id="groves" x="0" y="0" width="100%" height="100%" color-interpolation-filters="sRGB">
              <feTurbulence type="fractalNoise" baseFrequency=".1" numOctaves="4" seed="3"/>
              <feColorMatrix values="0 0 0 0 .18  0 0 0 0 .25  0 0 0 0 .17  7 0 0 0 -3.900"/>
            </filter>
            <filter id="relief" x="0" y="0" width="100%" height="100%" color-interpolation-filters="sRGB">
              <feTurbulence type="turbulence" baseFrequency=".07 .06" numOctaves="4" seed="5"/>
              <feColorMatrix values="0 0 0 0 .66  0 0 0 0 .64  0 0 0 0 .52  5 0 0 0 -1.100"/>
            </filter>
            <mask id="basin"><path d="M740 300l140-20 60 10 70 40-10 60-60 90-140 30-80-30 10-80z" fill="#fff" filter="url(#soft)"/></mask>
            <mask id="alps"><g filter="url(#soft)"><path d="M1010 520h40v140l-30-10-30-50z" fill="#fff"/><path d="M920 650l60-20 90 30-40 50-80 0z" fill="#666"/></g></mask>
            <mask id="pyrenees"><path d="M690 738l60 0 60 10 20 14-20 10-60-12-60-12z" fill="#fff" filter="url(#edge)"/></mask>
          </defs>

          <g clip-path="url(#clipFrance)">
            <rect x="470" y="175" width="640" height="610" fill="#4d5738"/>
            <g filter="url(#soft)">
              <path d="M785 190l60-10 60 60 30 60-60 10-100-10-60 10z" fill="#59613f"/>
              <path d="M740 305l130-20 50 40-20 60 10 60-60 45-60-10-40-90z" fill="#645f46"/>
              <ellipse cx="800" cy="385" rx="42" ry="24" fill="#736a4b"/>
              <ellipse cx="808" cy="473" rx="42" ry="13" fill="#72674a"/>
              <ellipse cx="890" cy="370" rx="30" ry="14" fill="#5a6248"/>
              <ellipse cx="918" cy="330" rx="24" ry="38" fill="#5b6545"/>
              <path d="M880 270l60 10 90 50 10 60-70 10-40-60z" fill="#47573c"/>
              <path d="M925 400l50 20-30 60-60 0z" fill="#555a3c"/>
              <ellipse cx="1046" cy="365" rx="12" ry="36" fill="#23281a"/>
              <ellipse cx="1030" cy="400" rx="12" ry="24" fill="#2c3322"/>
              <ellipse cx="806" cy="432" rx="24" ry="20" fill="#363c24"/>
              <ellipse cx="894" cy="448" rx="20" ry="15" fill="#323f24"/>
              <ellipse cx="540" cy="385" rx="60" ry="36" fill="#515940"/>
              <ellipse cx="620" cy="430" rx="80" ry="50" fill="#4e5536"/>
              <ellipse cx="670" cy="350" rx="25" ry="28" fill="#465130"/>
              <ellipse cx="980" cy="450" rx="30" ry="50" fill="#485537"/>
              <ellipse cx="830" cy="590" rx="60" ry="65" fill="#3b4425"/>
              <ellipse cx="780" cy="560" rx="40" ry="60" fill="#3d482b"/>
              <ellipse cx="882" cy="560" rx="12" ry="44" fill="#2a3019"/>
              <ellipse cx="680" cy="535" rx="26" ry="26" fill="#595d42"/>
              <ellipse cx="700" cy="580" rx="30" ry="18" fill="#505843"/>
              <ellipse cx="943" cy="590" rx="16" ry="70" fill="#585d47"/>
              <path d="M655 580l30 15 35 50-10 45-70 15z" fill="#3c3f2e"/>
              <ellipse cx="735" cy="690" rx="75" ry="20" fill="#545c42"/>
              <path d="M630 705l60 12 140 20 10 30-60-10-140-24z" fill="#2d391f"/>
              <ellipse cx="832" cy="698" rx="30" ry="12" fill="#334126"/>
              <path d="M810 725l60-25 60-15 20 20-80 15-20 40z" fill="#62634a"/>
              <ellipse cx="890" cy="650" rx="22" ry="50" fill="#373a23"/>
              <ellipse cx="985" cy="560" rx="28" ry="60" fill="#3c472c"/>
              <ellipse cx="980" cy="670" rx="70" ry="40" fill="#4c4d35"/>
              <ellipse cx="1072" cy="345" rx="12" ry="40" fill="#454f31"/>
            </g>
            <path d="M700 644l10-5 16 4v14h-24z" fill="#1f2a24" filter="url(#edge)"/>
            <rect x="470" y="175" width="640" height="610" filter="url(#woods)" opacity=".6"/>
            <rect x="470" y="175" width="640" height="610" filter="url(#fields)" opacity=".22"/>
            <g mask="url(#basin)">
              <rect x="700" y="260" width="330" height="260" filter="url(#fields)" opacity=".4"/>
              <rect x="700" y="260" width="330" height="260" filter="url(#groves)" opacity=".9"/>
            </g>
            <g mask="url(#alps)">
              <rect x="910" y="500" width="170" height="230" filter="url(#relief)" opacity=".6"/>
              <rect x="910" y="500" width="170" height="230" filter="url(#groves)" opacity=".9"/>
            </g>
            <g mask="url(#pyrenees)">
              <rect x="670" y="730" width="180" height="50" filter="url(#relief)" opacity=".55"/>
            </g>
            <path d="M661 570c12 8 18 15 19 28 2 8 8 14 12 22" fill="none" stroke="#77745e" stroke-width="3" filter="url(#edge)"/>

            <!-- sea tiles left around the coast -->
            <path d="M590 290h33v-14h38v20l-12-10-8 9-17-10v42h-34z" fill="#7b7c80"/>
            <path d="M610 314l6-3 6 4-2 6-8 0z" fill="#606350"/>
            <path d="M630 294h5l5 40-2 20h-4v-60z" fill="#18363f"/>
            <path d="M624 297l8 0 2 24h-6z" fill="#2b353c"/>
            <path d="M627 330h9v22l-5 6-10-2v-10z" fill="#2a4650"/>
            <path d="M603 350h24l-2 6-22 3z" fill="#83878b"/>
            <path d="M540 334h20l-8 12-22 9-10 5-4-12z" fill="#767a82"/>
            <path d="M564 334h18v12l8 9h14l-8 8-14-4-8-14z" fill="#1c3445"/>
            <path d="M470 362l22 0 8-12 28-5-10 6-20 10-7 18 2 6 10 2 8 8-10 6-4 8 8 8 18 8v6l-26-4v-14l-24-6z" fill="#16192d"/>
            <path d="M495 378l12-4-3 8 8 0-6 10-8-2z" fill="#223a4c"/>
            <path d="M528 418l22 3 12 5v6l-15-2z" fill="#84868c"/>
            <path d="M562 428l10 4 12 2 12 6 4 12h-40z" fill="#1d241f"/>
            <path d="M600 452h12l4 10h-16z" fill="#14202a"/>
            <path d="M598 462h17l3 20 4 12h-24z" fill="#34534f"/>
            <path d="M619 487l14 14 14 14 12 20 2 14-4 20v30l-1 14-6-50-18-35z" fill="#1d3f49"/>
            <path d="M656 600l-1 30-3 30-8 36-8 10-6-4 20-60z" fill="#33374a"/>
            <path d="M658 279v18l14 9 30 5 12-2-2-6h-16l-22-2-8-10z" fill="#151d30"/>
            <path d="M712 309l3-15 5-11 17-12 33-10 10-12 4-28 1-30 38-10" fill="none" stroke="#2c555b" stroke-width="3" filter="url(#edge)"/>
            <path d="M856 760l1-32 8-10 13-4 14-10 30 1 4 7 28 1" fill="none" stroke="#24505e" stroke-width="3" filter="url(#edge)"/>
            <path d="M953 708l16 7 14 8 20-1 14-8 14-8 12-10 8-10 20-6v8l-42 45-28 2-44-18z" fill="#15192e"/>
            <path d="M976 719l12 5 16-2v10l-28-6z" fill="#8a8d8c"/>
            <path d="M988 524l16-24 16 0-10 12-4 14z" fill="#a0a19d"/>
            <path d="M1006 499l30 1v12l-12-4-14 4z" fill="#233d49"/>
            <path d="M1036 532l6 4v10l-12 10 2-12z" fill="#8d8b7c"/>
          </g>

          <g clip-path="url(#clipCorse)">
            <rect x="1095" y="720" width="70" height="120" fill="#7c7a93"/>
            <path d="M1095 742h70v35h-70z" fill="#212f75"/>
            <path d="M1150 744h12v33h-12z" fill="#121530"/>
            <path d="M1095 777h20l6 50h-24z" fill="#65628c"/>
            <path d="M1104 797h14l4 30h-14z" fill="#45467c"/>
            <path d="M1150 777h12v70h-34l8-20z" fill="#9da4a2"/>
            <path d="M1147 730l3 10 0 18 4 20-6 22-4 20-5 14-8-4-10-10-4-14 5-6-8-8 2-12-5-8 6-12 14-8 9-2 4-8z" fill="#4f5738"/>
            <path d="M1124 755l14-4 4 20-8 14-10-12z" fill="#777059" opacity=".8" filter="url(#edge)"/>
            <rect x="1112" y="735" width="40" height="95" filter="url(#groves)" opacity=".8"/>
            <rect x="1112" y="735" width="40" height="95" filter="url(#fields)" opacity=".4"/>
          </g>
        </svg>
      </section>
    </main>

    <footer>
      <div class="search">
        <svg><use href="#search"/></svg>
        <input type="text" aria-label="Rechercher" placeholder="Taper pour trouver (⌘K)">
      </div>
      <div class="status">
        <label for="coord">Coordonnée</label>
        <input class="coord" type="text" id="coord" value="-555399  5751794">
        <button class="mouse" title="Suivre la souris"><svg><use href="#mouse"/></svg></button>
        <label for="scale">Échelle</label>
        <div class="combo">
          <select id="scale"><option>1:6319829</option></select>
          <span class="drop"></span>
        </div>
        <button class="lock" title="Verrouiller l'échelle"><svg><use href="#lock"/></svg></button>
        <label for="zoom">Loupe</label>
        <div class="spin">
          <input type="text" id="zoom" value="100%">
          <span class="steps"><button title="Plus"></button><button title="Moins"></button></span>
        </div>
        <label class="rotation" for="rotation">Rotation</label>
        <div class="spin">
          <input type="text" id="rotation" value="0,0 °">
          <span class="steps"><button title="Plus"></button><button title="Moins"></button></span>
        </div>
        <input class="render" type="checkbox" id="render" checked>
        <label for="render">Rendu</label>
        <button class="crs"><svg><use href="#crs"/></svg>EPSG:3857</button>
        <button class="chat" title="Messages"><svg><use href="#chat"/></svg></button>
      </div>
    </footer>
  </div>

  <script>
    // turn each outline into small stairs, like the edges of the raster tiles
    document.querySelectorAll(".outline").forEach(function (path) {
      var step = Number(path.dataset.step);
      var pts = path.dataset.points.split(" ").map(function (p) {
        return p.split(",").map(Number);
      });
      var d = "M" + pts[0].join(" ");
      for (var i = 1; i < pts.length; i++) {
        var dx = pts[i][0] - pts[i - 1][0];
        var dy = pts[i][1] - pts[i - 1][1];
        var n = Math.max(1, Math.round(Math.max(Math.abs(dx), Math.abs(dy)) / step));
        for (var k = 1; k <= n; k++) {
          d += "H" + Math.round(pts[i - 1][0] + dx * k / n) + "V" + Math.round(pts[i - 1][1] + dy * k / n);
        }
      }
      path.setAttribute("d", d + "Z");
    });
  </script>
</body>
</html>
```
FILE: styles.css
```css
* {
  box-sizing: border-box;
}

body {
  margin: 0;
  height: 100vh;
  padding: 0 10px 13px 14px;
  background: #fdfdfd;
  font-family: Inter, "Liberation Sans", sans-serif;
  font-size: 11px;
  color: #333;
  overflow: hidden;
}

.sprite {
  display: none;
}

h1, h2, p {
  margin: 0;
}

button {
  position: relative;
  display: flex;
  align-items: center;
  padding: 0;
  border: 0;
  background: none;
  color: inherit;
  font: inherit;
}

.window {
  display: flex;
  flex-direction: column;
  height: 100%;
  border: 1px solid #c9c9c9;
  border-top-color: #dcdcdc;
  border-radius: 10px;
  background: #ebebeb;
  box-shadow: 0 6px 18px rgba(0, 0, 0, 0.3);
  overflow: hidden;
}

/* title bar */
.titlebar {
  display: grid;
  grid-template-columns: 1fr auto 1fr;
  align-items: center;
  height: 23px;
  padding: 0 6px 4px;
  background: #e7e7e5;
  border-bottom: 1px solid #dadada;
}

.titlebar h1 {
  font-size: 12px;
  font-weight: 600;
  color: #a3a3a1;
}

.lights {
  display: flex;
  gap: 6px;
}

.lights i {
  width: 12px;
  height: 12px;
  border: 1px solid #bcbcba;
  border-radius: 50%;
  background: #cbcbc9;
}

/* toolbars */
.toolbar {
  display: flex;
  align-items: center;
  height: 36px;
  background: linear-gradient(#f6f6f6, #ebebeb);
  border-bottom: 2px solid #d3d3d3;
}

.last {
  height: 35px;
}

.grip {
  flex: none;
  width: 15px;
  height: 16px;
  background: radial-gradient(circle, #cacaca 1px, transparent 1px) 0 0 / 3px 3px;
  background-clip: content-box;
  padding: 0 5px 0 6px;
}

.grip:first-child {
  width: 11px;
  padding: 0 3px 0 4px;
}

.group {
  display: flex;
  align-items: center;
}

.file { width: 183px; }
.nav { width: 488px; }
.selection { width: 166px; }
.attributes { width: 278px; }
.sources { width: 213px; }
.editing { width: 419px; }
.labels { width: 287px; }
.gps { width: 258px; }

.toolbar button {
  flex: 0 0 30px;
  height: 29px;
  padding-left: 3px;
}

.group button {
  flex: 1 1 30px;
}

.toolbar .group .menu {
  flex-basis: 41px;
}

.toolbar svg {
  width: 24px;
  height: 24px;
  flex: none;
}

.toolbar .active {
  padding-left: 2px;
  background: #d3d3d3;
  border: 1px solid #b5b5b5;
  border-radius: 3px;
}

button:disabled svg, .dim svg {
  filter: grayscale(0.6);
  opacity: 0.32;
}

.menu::after, .corner::after {
  content: "";
  border: 3px solid transparent;
  border-top: 4px solid #444;
  border-bottom: 0;
}

.menu::after {
  margin-left: 5px;
}

.corner::after {
  position: absolute;
  right: 0;
  bottom: 1px;
  border-width: 3px 2px 0;
}

.sep {
  width: 1px;
  height: 18px;
  margin: 0 3px 0 2px;
  background: #d2d2d2;
}

/* layers panel and map */
main {
  flex: 1;
  display: flex;
  gap: 5px;
  min-height: 0;
}

aside {
  display: flex;
  flex-direction: column;
  width: 428px;
}

.panel-title {
  display: flex;
  align-items: center;
  gap: 3px;
  height: 20px;
  padding: 0 2px 0 3px;
}

.panel-title h2 {
  flex: 1;
  font-size: 10px;
  font-weight: 500;
}

.panel-title button {
  width: 10px;
  height: 10px;
  justify-content: center;
  border: 1px solid #777;
  border-radius: 2px;
}

.panel-title svg {
  width: 8px;
  height: 8px;
}

.panel-tools {
  display: flex;
  height: 26px;
  padding: 0 3px 2px;
}

.panel-tools button {
  width: 23px;
  padding-left: 4px;
}

.panel-tools .menu {
  width: 34px;
}

.panel-tools svg {
  width: 15px;
  height: 15px;
  flex: none;
}

.tree {
  flex: 1;
  border: 1px solid #c3c3c3;
  border-left: 0;
  background: #fff;
}

.layer {
  display: flex;
  align-items: center;
  height: 17px;
  padding-left: 6px;
  background: #dbdbdb;
}

.arrow {
  border: 4px solid transparent;
  border-top: 5px solid #666;
  border-bottom: 0;
}

.layer svg {
  width: 13px;
  height: 13px;
  margin: 0 6px 0 7px;
}

.layer label {
  font-size: 12px;
  font-weight: 700;
  color: #111;
  text-decoration: underline;
}

input[type="checkbox"] {
  appearance: none;
  flex: none;
  display: grid;
  place-items: center;
  width: 12px;
  height: 12px;
  margin: 0;
  border: 1px solid #c4c4c4;
  border-radius: 2px;
  background: #fff;
}

.layer input[type="checkbox"] {
  margin-left: 8px;
}

input[type="checkbox"]:checked::after {
  content: "";
  width: 4px;
  height: 8px;
  margin-top: -2px;
  border: solid #222;
  border-width: 0 2px 2px 0;
  transform: rotate(38deg);
}

.tree p {
  width: 270px;
  padding: 15px 0 0 58px;
  font-family: "Open Sans", "Noto Sans", sans-serif;
  font-size: 11px;
  font-weight: 600;
  line-height: 17px;
  color: #33497a;
}

.canvas {
  flex: 1;
  min-width: 0;
  margin-top: 1px;
  border: 1px solid #c3c3c3;
  border-right: 0;
  background: #fff;
}

.canvas svg {
  display: block;
  width: 100%;
  height: 100%;
}

/* status bar */
footer {
  display: flex;
  align-items: center;
  justify-content: space-between;
  height: 27px;
  padding: 2px 27px 0 3px;
}

input[type="text"], select {
  height: 20px;
  border: 1px solid #bdbdbd;
  border-radius: 2px;
  background: #fff;
  color: #333;
  font: inherit;
}

.search {
  display: flex;
  align-items: center;
  width: 242px;
  height: 22px;
  border: 1px solid #bdbdbd;
  border-radius: 3px;
  background: #fff;
}

.search svg {
  width: 12px;
  height: 12px;
  margin: 0 5px 0 7px;
}

.search input[type="text"] {
  flex: 1;
  min-width: 0;
  border: 0;
  font-size: 12px;
}

.search input::placeholder {
  color: #808080;
}

.status {
  display: flex;
  align-items: center;
}

.status label, .crs {
  font-size: 10px;
  font-weight: 500;
}

.status .coord {
  width: 108px;
  margin: 0 4px;
  padding: 0 6px;
  text-align: center;
  white-space: pre;
}

.status svg {
  width: 14px;
  height: 14px;
}

.status .chat svg {
  width: 16px;
  height: 16px;
}

.mouse {
  margin-right: 12px;
}

.combo {
  position: relative;
  margin: 0 9px 0 4px;
}

.combo select {
  display: block;
  appearance: none;
  width: 86px;
  padding: 0 3px;
}

.drop {
  position: absolute;
  top: 1px;
  right: 1px;
  display: grid;
  place-items: center;
  width: 19px;
  height: 18px;
  border-left: 1px solid #c4c4c4;
  background: #f1f1f1;
  pointer-events: none;
}

.drop::after {
  content: "";
  border: 4px solid transparent;
  border-top: 5px solid #555;
  border-bottom: 0;
}

.lock {
  margin-right: 7px;
}

.spin {
  display: flex;
  width: 86px;
  margin: 0 7px 0 4px;
}

.spin input[type="text"] {
  flex: 1;
  min-width: 0;
  padding: 0 3px;
  border-radius: 2px 0 0 2px;
}

.steps {
  display: flex;
  flex-direction: column;
  justify-content: center;
  gap: 4px;
  width: 13px;
  border: 1px solid #bdbdbd;
  border-left: 0;
  border-radius: 0 2px 2px 0;
  background: #f4f4f4;
}

.steps button {
  align-self: center;
  border: 3px solid transparent;
  border-bottom: 4px solid #555;
  border-top: 0;
}

.steps button + button {
  border-top: 4px solid #555;
  border-bottom: 0;
}

.rotation {
  margin-right: 4px;
}

.status .render {
  margin-right: 5px;
}

.crs {
  margin: 0 20px 0 15px;
  gap: 2px;
}
```
